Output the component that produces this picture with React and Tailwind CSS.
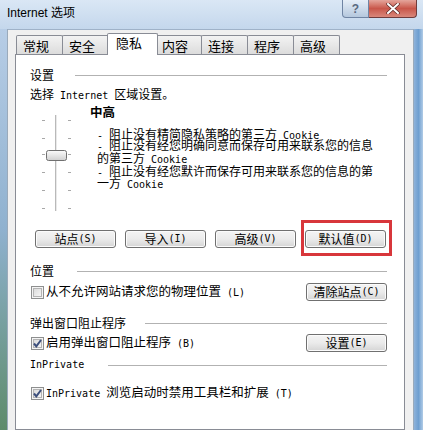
import React from 'react';

// Latin runs in SimSun are half-width; a 10px mono face gives the same 6px advance
const mix = (s) =>
    s.split(/([\x20-\x7e]+)/).map((p, i) =>
        /^[\x20-\x7e]+$/.test(p) ? (
            <span key={i} className="font-['DejaVu_Sans_Mono',monospace] text-[10px]">{p}</span>
        ) : (
            p
        )
    );

function Button({ label, className = '' }) {
    return (
        <div
            className={`flex items-center justify-center w-[81px] h-[18px] rounded-[3px] border border-[#707070] bg-linear-to-b from-[#f4f4f4] via-[#ebebeb] to-[#d5d5d5] shadow-[inset_0_0_0_1px_#fbfbfb] text-[12px] leading-[12px] text-black ${className}`}
        >
            {mix(label)}
        </div>
    );
}

function Checkbox({ checked }) {
    return (
        <svg width="13" height="13" viewBox="0 0 13 13" className="shrink-0">
            <defs>
                <linearGradient id="cbg" x1="0" y1="0" x2="1" y2="1">
                    <stop offset="0" stopColor="#d9d9d9" />
                    <stop offset="1" stopColor="#f7f7f7" />
                </linearGradient>
            </defs>
            <rect x="0.5" y="0.5" width="12" height="12" fill="#f4f4f4" stroke="#8e8f8f" />
            <rect x="2.5" y="2.5" width="8" height="8" fill="url(#cbg)" stroke="#b4b4b4" />
            {checked && (
                <path d="M3 6.5 L5.3 9.3 L10 3" fill="none" stroke="#3c4f7c" strokeWidth="2" />
            )}
        </svg>
    );
}

function GroupHeader({ title, gap, mono }) {
    return (
        <div className="flex items-center h-[12px] pr-[17px]">
            <span className={mono ? "font-['DejaVu_Sans_Mono',monospace] text-[10px] leading-[12px]" : 'leading-[12px]'}>
                {title}
            </span>
            <div className={`flex-1 h-px bg-[#b2b2b2] ${gap}`} />
        </div>
    );
}

function Slider() {
    const ticks = [14, 32, 48, 66, 84, 102];
    return (
        <svg width="50" height="110" viewBox="0 0 50 110" className="shrink-0">
            <defs>
                <linearGradient id="thumb" x1="0" y1="0" x2="0" y2="1">
                    <stop offset="0" stopColor="#fbfbfb" />
                    <stop offset="0.5" stopColor="#e6e6e6" />
                    <stop offset="1" stopColor="#cfcfcf" />
                </linearGradient>
            </defs>
            <line x1="25.5" y1="9" x2="25.5" y2="105" stroke="#b9b9b9" />
            <line x1="26.5" y1="9" x2="26.5" y2="105" stroke="#e9e9e9" />
            {ticks.map((y) => (
                <g key={y}>
                    <line x1="12" y1={y + 0.5} x2="15" y2={y + 0.5} stroke="#a8a8a8" />
                    <line x1="38" y1={y + 0.5} x2="41" y2={y + 0.5} stroke="#a8a8a8" />
                </g>
            ))}
            <rect x="16.5" y="44.5" width="20" height="10" rx="2" fill="url(#thumb)" stroke="#707070" />
        </svg>
    );
}

const tabs = ['常规', '安全', '隐私', '内容', '连接', '程序', '高级'];

export default function App() {
    return (
        <div className="w-[423px] h-[430px] overflow-hidden flex flex-col bg-[#c4d7ec] font-['Noto_Sans_CJK_SC',sans-serif] text-[12px] text-black">
            {/* title bar */}
            <div className="h-[29px] shrink-0 flex items-start justify-between bg-linear-to-b from-[#dae7f5] to-[#c4d7ec]">
                <div className="pl-[7px] pt-[6px] text-[12px] leading-[14px] font-['Liberation_Sans','Noto_Sans_CJK_SC',sans-serif]">
                    Internet 选项
                </div>
                <div className="flex mr-[6px]">
                    <div className="w-[27px] h-[18px] flex items-center justify-center rounded-bl-[4px] border border-t-0 border-[#6f84a3] bg-linear-to-b from-[#e6eef7] to-[#b5c8de] text-[12px] leading-[12px] text-[#5a6a80] font-['Liberation_Sans',sans-serif] font-bold">
                        ?
                    </div>
                    <div className="w-[48px] h-[18px] flex items-center justify-center rounded-br-[4px] border border-l-0 border-t-0 border-[#6f3c3c] bg-linear-to-b from-[#e4a59c] via-[#c8564a] to-[#d9877b]">
                        <svg width="14" height="11" viewBox="0 0 14 11">
                            <path d="M2 1 L12 10 M12 1 L2 10" stroke="#5a2a28" strokeWidth="3.4" strokeLinecap="round" />
                            <path d="M2 1 L12 10 M12 1 L2 10" stroke="#ffffff" strokeWidth="2" strokeLinecap="round" />
                        </svg>
                    </div>
                </div>
            </div>

            <div className="flex flex-1 min-h-0">
                {/* left frame */}
                <div className="w-[8px] shrink-0 bg-linear-to-b from-[#b7cde6] via-[#8fb1cf] to-[#5e8b6a] border-r border-[#9aaabb]" />

                {/* client area */}
                <div className="flex-1 flex flex-col bg-[#f0f0f0] border-t border-[#9fb2c8] pl-[7px] pr-[8px]">
                    {/* tabs */}
                    <div className="flex items-end h-[24px] shrink-0 pl-[1px]">
                        {tabs.map((t, i) =>
                            t === '隐私' ? (
                                <div
                                    key={t}
                                    className="relative z-10 -mb-px -mx-[2px] w-[51px] h-[22px] pl-[8px] pt-[2px] leading-[14px] text-[13px] bg-white border border-b-0 border-[#898c95] rounded-t-[2px]"
                                >
                                    {t}
                                </div>
                            ) : (
                                <div
                                    key={t}
                                    className={`w-[47px] h-[19px] pl-[6px] pt-[3px] leading-[14px] text-[13px] bg-linear-to-b from-[#f3f3f3] to-[#dcdcdc] border border-b-0 border-[#898c95] rounded-t-[2px] ${i > 0 ? '-ml-px' : ''}`}
                                >
                                    {t}
                                </div>
                            )
                        )}
                    </div>

                    {/* panel */}
                    <div className="flex-1 bg-white border border-[#898c95] pl-[14px] pt-[14px] flex flex-col">
                        <GroupHeader title="设置" gap="ml-[21px]" />
                        <div className="mt-[7px] h-[12px] leading-[12px]">{mix('选择 Internet 区域设置。')}</div>

                        <div className="flex mt-[6px]">
                            <Slider />
                            <div className="flex flex-col ml-[10px]">
                                <div className="h-[12px] leading-[12px] font-bold text-[12.5px]">中高</div>
                                <div className="mt-[10px] pl-[7px] flex flex-col leading-[12px] whitespace-nowrap">
                                    <div className="h-[11px]">{mix('- 阻止没有精简隐私策略的第三方 Cookie')}</div>
                                    <div className="h-[13px]">{mix('- 阻止没有经您明确同意而保存可用来联系您的信息')}</div>
                                    <div className="h-[13px]">{mix('的第三方 Cookie')}</div>
                                    <div className="h-[12px]">{mix('- 阻止没有经您默许而保存可用来联系您的信息的第')}</div>
                                    <div className="h-[12px]">{mix('一方 Cookie')}</div>
                                </div>
                            </div>
                        </div>

                        <div className="flex gap-[9px] mt-[14px] ml-[5px]">
                            <Button label="站点 (S)" />
                            <Button label="导入 (I)" />
                            <Button label="高级 (V)" />
                            <div className="relative">
                                <Button label="默认值 (D)" />
                                <div className="absolute -left-[4px] -top-[10px] w-[91px] h-[36px] border-[3px] border-[#d8363b]" />
                            </div>
                        </div>

                        <div className="mt-[17px]">
                            <GroupHeader title="位置" gap="ml-[23px]" />
                        </div>
                        <div className="mt-[6px] flex items-center justify-between pr-[17px]">
                            <div className="flex items-center gap-[2px] ml-[1px]">
                                <Checkbox />
                                <span className="leading-[12px] text-[12.5px]">{mix('从不允许网站请求您的物理位置 (L)')}</span>
                            </div>
                            <Button label="清除站点 (C)" />
                        </div>

                        <div className="mt-[16px]">
                            <GroupHeader title="弹出窗口阻止程序" gap="ml-[19px]" />
                        </div>
                        <div className="mt-[5px] flex items-center justify-between pr-[17px]">
                            <div className="flex items-center gap-[2px] ml-[1px]">
                                <Checkbox checked />
                                <span className="leading-[12px] text-[12.5px]">{mix('启用弹出窗口阻止程序 (B)')}</span>
                            </div>
                            <Button label="设置 (E)" />
                        </div>

                        <div className="mt-[7px]">
                            <GroupHeader title="InPrivate" gap="ml-[24px]" mono />
                        </div>
                        <div className="mt-[15px] flex items-center gap-[2px] ml-[1px]">
                            <Checkbox checked />
                            <span className="leading-[12px] text-[12.5px]">{mix('InPrivate 浏览启动时禁用工具栏和扩展 (T)')}</span>
                        </div>
                    </div>
                </div>

                {/* right frame */}
                <div className="w-[10px] shrink-0 bg-linear-to-r from-[#8fb3da] via-[#6f9fd0] to-[#b0cbe6] border-l border-[#9aaabb]" />
            </div>
        </div>
    );
}
